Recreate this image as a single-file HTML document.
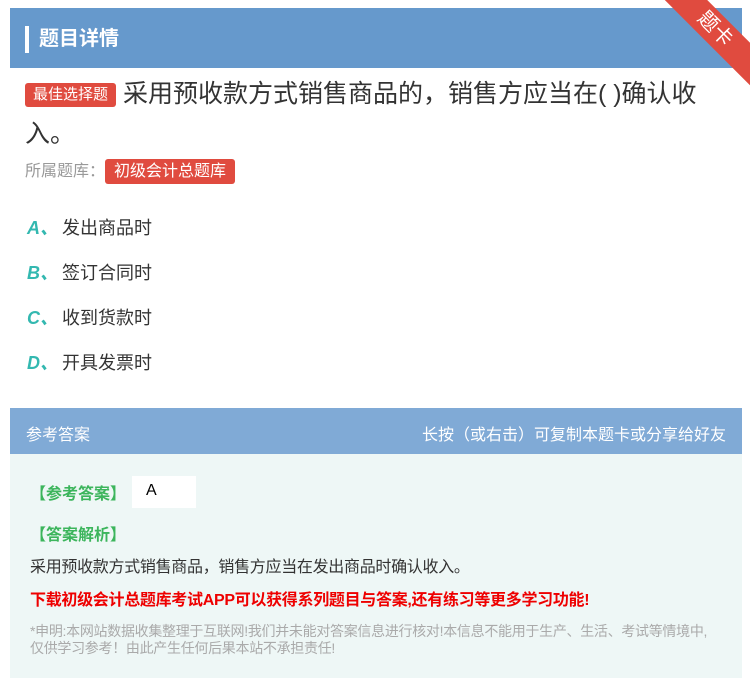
<!DOCTYPE html>
<html><head><meta charset="utf-8"><style>
*{margin:0;padding:0;box-sizing:border-box}
body{width:750px;height:678px;background:#fff;font-family:"Liberation Sans","Noto Sans CJK SC",sans-serif;position:relative;overflow:hidden}
.hdr{position:absolute;left:10px;top:8px;width:732px;height:60px;background:#6699cc}
.hdr .bar{position:absolute;left:15px;top:18px;width:4px;height:27px;background:#fff}
.hdr .t{position:absolute;left:29px;top:14px;color:#fff;font-size:20px;font-weight:bold}
.rib{position:absolute;right:-30px;top:14px;width:130px;height:30px;background:#e04b3f;transform:rotate(45deg);color:#fff;font-size:20px;text-align:center;line-height:30px}
.q{position:absolute;left:25px;top:74px;width:690px;font-size:25px;line-height:40px;color:#333}
.tag{display:inline-block;background:#e04b3f;color:#fff;font-size:15px;line-height:24px;padding:0 8px;border-radius:3px;vertical-align:3px}
.lib{position:absolute;left:25px;top:157px;font-size:16px;color:#999}
.lib .tag{vertical-align:0;font-size:16px;padding:0 9px;line-height:25px}
.opt{position:absolute;left:27px;font-size:18px;color:#333}
.opt b{color:#33b8b0;font-style:italic;margin-right:4px}
.ah{position:absolute;left:10px;top:408px;width:732px;height:46px;background:#80aad6;color:#fff;font-size:16px}
.ah span{position:absolute;top:13px}
.ab{position:absolute;left:10px;top:454px;width:732px;height:224px;background:#eef7f6}
.g{color:#3cb55c;font-size:16px;font-weight:bold;position:absolute}
</style></head><body>
<div class="hdr"><div class="bar"></div><div class="t">题目详情</div></div>
<div class="rib">题卡</div>
<div class="q"><span class="tag">最佳选择题</span> 采用预收款方式销售商品的，销售方应当在( )确认收入。</div>
<div class="lib">所属题库：<span class="tag">初级会计总题库</span></div>
<div class="opt" style="top:214px"><b>A、</b>发出商品时</div>
<div class="opt" style="top:259px"><b>B、</b>签订合同时</div>
<div class="opt" style="top:304px"><b>C、</b>收到货款时</div>
<div class="opt" style="top:349px"><b>D、</b>开具发票时</div>
<div class="ah"><span style="left:16px">参考答案</span><span style="right:16px">长按（或右击）可复制本题卡或分享给好友</span></div>
<div class="ab">
<div class="g" style="left:20px;top:26px">【参考答案】</div>
<div style="position:absolute;left:122px;top:22px;width:64px;height:32px;background:#fff;font-size:16px;padding:6px 0 0 14px">A</div>
<div class="g" style="left:20px;top:67px">【答案解析】</div>
<div style="position:absolute;left:20px;top:99px;font-size:16px;letter-spacing:-0.3px;color:#333">采用预收款方式销售商品，销售方应当在发出商品时确认收入。</div>
<div style="position:absolute;left:20px;top:132px;font-size:16px;letter-spacing:-0.3px;color:#e00;font-weight:bold">下载初级会计总题库考试APP可以获得系列题目与答案,还有练习等更多学习功能!</div>
<div style="position:absolute;left:20px;top:169px;width:690px;font-size:14px;letter-spacing:-0.3px;color:#aaa;line-height:17px">*申明:本网站数据收集整理于互联网!我们并未能对答案信息进行核对!本信息不能用于生产、生活、考试等情境中,仅供学习参考！由此产生任何后果本站不承担责任!</div>
</div>
</body></html>
